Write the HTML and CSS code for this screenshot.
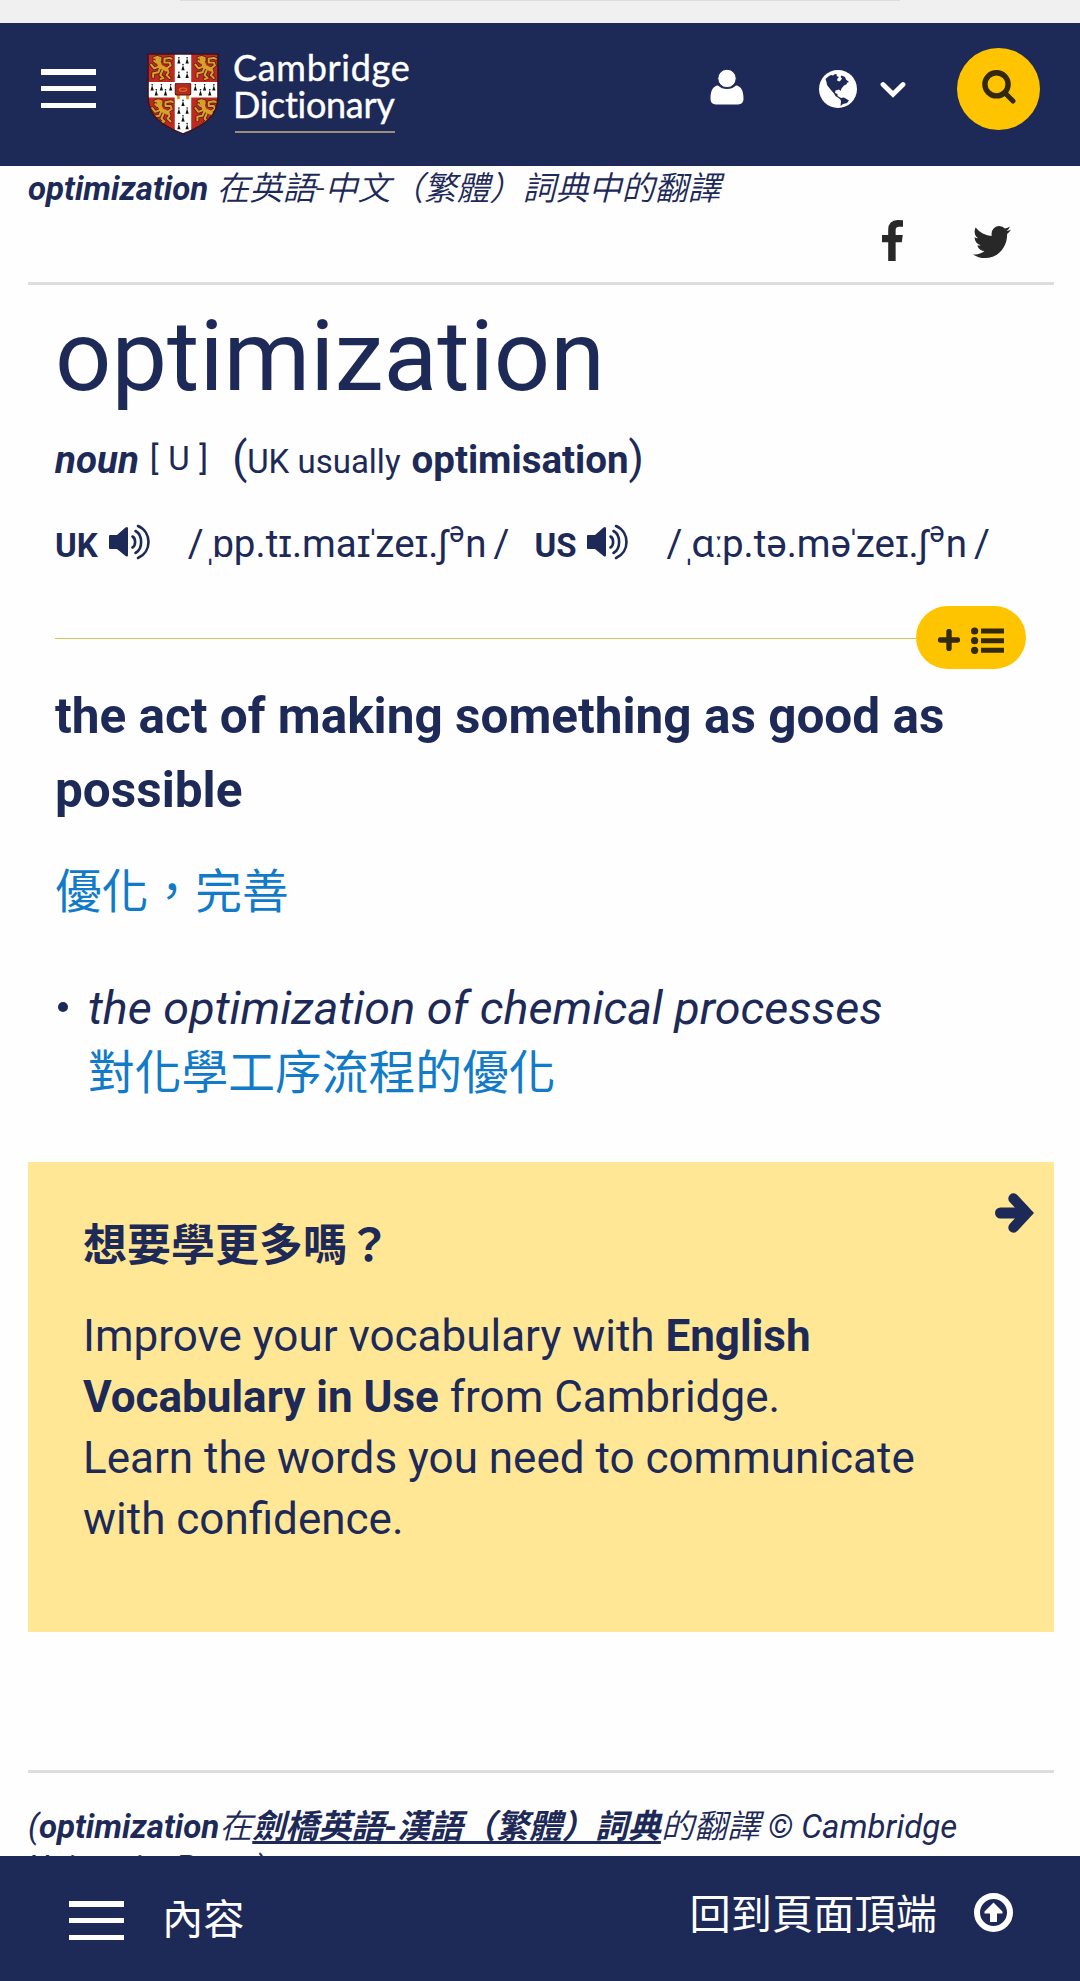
FILE: index.html
```
<!DOCTYPE html>
<html lang="zh-Hant">
<head>
    <meta charset="utf-8">
    <title>optimization | Cambridge Dictionary</title>
    <link rel="stylesheet" href="styles.css">
</head>
<body>
    <div class="browser-edge"><div class="address-bar"></div></div>

    <header class="header">
        <div class="burger"><span></span><span></span><span></span></div>
        <a class="logo">
            <svg class="shield" viewBox="0 0 70 85" preserveAspectRatio="none">
                <defs>
                    <clipPath id="shieldClip"><path d="M1 1H69V45C69 66 56 75 35 84C14 75 1 66 1 45Z"/></clipPath>
                    <g id="lion" fill="none" stroke-linecap="round" stroke-linejoin="round">
                        <path d="M2 11l3 4 5-2M5 4l3-1 3 1 0 3-4 2-2-2M9 9l2 5 6 1 2 4-2 3 3 3M11 14l-2 5-5 1 0 4M13 17l-2 5 3 3-3 1M17 15l4-3-1-3-5 0 0-4 5-1 2 1" stroke="#5f1c12" stroke-width="3.600"/>
                        <path d="M2 11l3 4 5-2M5 4l3-1 3 1 0 3-4 2-2-2M9 9l2 5 6 1 2 4-2 3 3 3M11 14l-2 5-5 1 0 4M13 17l-2 5 3 3-3 1M17 15l4-3-1-3-5 0 0-4 5-1 2 1" stroke="#d9a02a" stroke-width="2"/>
                        <path d="M8 5l3 8 6 3" stroke="#d9a02a" stroke-width="4"/>
                    </g>
                    <g id="ermine" fill="#111"><circle cx="0" cy="-3" r=".8"/><path d="M0-2.500L1.600 3H-1.600Z"/></g>
                </defs>
                <g clip-path="url(#shieldClip)">
                    <rect width="70" height="85" fill="#bf2a20"/>
                    <use href="#lion" x="2" y="1"/>
                    <use href="#lion" x="45" y="1"/>
                    <use href="#lion" x="3" y="46"/>
                    <use href="#lion" x="45" y="46"/>
                    <path d="M27 0H43V85H27ZM0 30H70V46H0Z" fill="#fff"/>
                    <use href="#ermine" x="31" y="8"/><use href="#ermine" x="39" y="8"/>
                    <use href="#ermine" x="35" y="15"/>
                    <use href="#ermine" x="31" y="23"/><use href="#ermine" x="39" y="23"/>
                    <use href="#ermine" x="5" y="36"/><use href="#ermine" x="9" y="41"/><use href="#ermine" x="14" y="36"/><use href="#ermine" x="18" y="41"/><use href="#ermine" x="23" y="36"/>
                    <use href="#ermine" x="47" y="36"/><use href="#ermine" x="52" y="41"/><use href="#ermine" x="56" y="36"/><use href="#ermine" x="61" y="41"/><use href="#ermine" x="65" y="36"/>
                    <use href="#ermine" x="35" y="52"/>
                    <use href="#ermine" x="31" y="60"/><use href="#ermine" x="39" y="60"/>
                    <use href="#ermine" x="35" y="68"/>
                    <use href="#ermine" x="31" y="76"/><use href="#ermine" x="39" y="76"/>
                    <path d="M29 43h3v5h-3zM38 43h3v5h-3z" fill="#d99a22"/>
                    <rect x="27.500" y="31.500" width="15" height="12" rx="1" fill="#b5281c" stroke="#5c1710"/>
                    <ellipse cx="35" cy="38" rx="3.500" ry="1.700" fill="none" stroke="#e07b2c"/>
                </g>
                <path d="M1 1H69V45C69 66 56 75 35 84C14 75 1 66 1 45Z" fill="none" stroke="#3a1420" stroke-width="1.500"/>
            </svg>
            <span class="logo-text"><span class="logo-one">Cambridge</span><span class="logo-two">Dictionary</span></span>
        </a>
        <svg class="user" viewBox="0 0 34 38" preserveAspectRatio="none" fill="#fff">
            <path d="M8 17.500C10.500 20 13.500 21.200 17 21.200S23.500 20 26 17.500C31 18 33.500 23 33.500 31C33.500 35.500 31.500 37.500 28 37.500H6C2.500 37.500 .5 35.500 .5 31C.5 23 3 18 8 17.500Z"/>
            <ellipse cx="17" cy="10" rx="9.200" ry="9.700" stroke="#1d2957" stroke-width="1"/>
        </svg>
        <svg class="globe" viewBox="0 0 38 38">
            <circle cx="19" cy="19" r="19" fill="#fff"/>
            <path d="M6.500 9L10 6L12 5L14 5.500L16 4L18 4.500L17.500 6L20 7L18.500 8.500L18 10.500L20.500 11.500L22 10L23 8.500L21.500 7L22.500 5.500L26 7L27 9.500L30 12L27.500 13L28 14L25 15.500L22.500 18.500L21.500 21L20 19.500L16.500 20.500L16 23L18.500 24L18.500 26L22 28L25 27.500L30 30.500L28 33L24 34L21.500 36L22 31L21 29L16.500 26L15 23.500L11.500 19.500L8 15L7.500 12Z" fill="#1d2957"/>
        </svg>
        <svg class="chevron" viewBox="0 0 26 17"><path d="M3 3.500L13 13.300L23 3.500" fill="none" stroke="#fff" stroke-width="4.800" stroke-linecap="round"/></svg>
        <div class="search">
            <svg viewBox="0 0 34 34" fill="none" stroke="#33290d"><circle cx="14.500" cy="14.300" r="11.600" stroke-width="5.400"/><path d="M23.500 23.500L31 31" stroke-width="5" stroke-linecap="round"/></svg>
        </div>
    </header>

    <main>
        <p class="breadcrumb"><b>optimization</b> <span>在英語-中文（繁體）詞典中的翻譯</span></p>
        <div class="share">
            <svg class="facebook" viewBox="479 0 864 1664" preserveAspectRatio="none"><path d="M1343 12v264h-157q-86 0-116 36t-30 108v189h293l-39 296h-254v759h-306v-759h-255v-296h255v-218q0-186 104-288.500t277-102.500q147 0 228 12z"/></svg>
            <svg class="twitter" viewBox="108 256 1576 1280" preserveAspectRatio="none"><path d="M1684 408q-67 98-162 167 1 14 1 42 0 130-38 259.500t-115.500 248.500-184.500 210.500-258 146-323 54.500q-271 0-496-145 35 4 78 4 225 0 401-138-105-2-188-64.500t-114-159.500q33 5 61 5 43 0 85-11-112-23-185.500-111.500t-73.500-205.500v-4q68 38 146 41-66-44-105-115t-39-154q0-88 44-163 121 149 294.500 238.500t371.500 99.500q-8-38-8-74 0-134 94.500-228.500t228.500-94.500q140 0 236 102 109-21 205-78-37 115-142 178 93-10 186-50z"/></svg>
        </div>

        <section class="entry">
            <h1>optimization</h1>
            <div class="pos">
                <b class="noun">noun</b>
                <span class="gram">[ U ]</span>
                <span class="variant"><span class="paren">(</span><span class="usage">UK usually</span><b>optimisation</b><span class="paren">)</span></span>
            </div>
            <div class="pron">
                <b class="region">UK</b>
                <svg class="speaker" viewBox="0 0 41 36"><path d="M1 11H8L16.500 3.500Q19 2 19 4.500V31Q19 33.500 16.500 32L8 25H1Q0 25 0 24V12Q0 11 1 11Z" fill="#1d2957"/><g fill="none" stroke="#1d2957" stroke-width="2.600" stroke-linecap="round"><path d="M23.500 12.500C27 14.500 27 21.500 23.500 23.500M26.500 7C34 11 34 25 26.500 29M29 2C43 8 43 28 29 34"/></g></svg>
                <span class="ipa ipa-uk">/<i><span class="mark">ˌ</span>ɒp.tɪ.maɪ<span class="mark">ˈ</span>zeɪ.ʃ<sup>ə</sup>n</i>/</span>
                <b class="region">US</b>
                <svg class="speaker" viewBox="0 0 41 36"><path d="M1 11H8L16.500 3.500Q19 2 19 4.500V31Q19 33.500 16.500 32L8 25H1Q0 25 0 24V12Q0 11 1 11Z" fill="#1d2957"/><g fill="none" stroke="#1d2957" stroke-width="2.600" stroke-linecap="round"><path d="M23.500 12.500C27 14.500 27 21.500 23.500 23.500M26.500 7C34 11 34 25 26.500 29M29 2C43 8 43 28 29 34"/></g></svg>
                <span class="ipa ipa-us">/<i><span class="mark">ˌ</span>ɑ<span class="length">ː</span>p.tə.mə<span class="mark">ˈ</span>zeɪ.ʃ<sup>ə</sup>n</i>/</span>
            </div>
            <div class="wordlist">
                <div class="wordlist-line"></div>
                <div class="wordlist-button">
                    <svg class="plus" viewBox="0 0 22 22"><path d="M11 2.500V19.500M2.500 11H19.500" stroke="#33290d" stroke-width="5.400" stroke-linecap="round"/></svg>
                    <svg class="list" viewBox="0 0 33 27" fill="#33290d"><circle cx="3.600" cy="4" r="3.600"/><circle cx="3.600" cy="13.700" r="3.600"/><circle cx="3.600" cy="23.300" r="3.600"/><path d="M10 1.500H33V6.500H10ZM10 11.200H33V16.200H10ZM10 20.800H33V25.800H10Z"/></svg>
                </div>
            </div>
            <h2>the act of making something as good as possible</h2>
            <p class="trans">優化，完善</p>
            <div class="example">
                <span class="bullet"></span>
                <div>
                    <em>the optimization of chemical processes</em>
                    <p class="trans">對化學工序流程的優化</p>
                </div>
            </div>
        </section>

        <section class="promo">
            <div class="promo-text">
                <h3>想要學更多嗎？</h3>
                <p>Improve your vocabulary with <b>English Vocabulary in Use</b> from Cambridge.<br>Learn the words you need to communicate with confidence.</p>
            </div>
            <svg class="arrow" viewBox="0 0 39 40" fill="none" stroke="#1d2957" stroke-linecap="round"><path d="M5.500 20H30" stroke-width="11"/><path d="M18.500 5.500L32 20L18.500 34.500" stroke-width="10.400"/></svg>
        </section>

        <p class="credit">(<b>optimization</b><span>在</span><a>劍橋英語-漢語（繁體）詞典</a><span>的翻譯</span> © Cambridge University Press)</p>
    </main>

    <footer class="bottom-bar">
        <div class="burger"><span></span><span></span><span></span></div>
        <span class="contents">內容</span>
        <span class="to-top">回到頁面頂端</span>
        <svg class="top-icon" viewBox="0 0 39 39"><circle cx="19.500" cy="19.500" r="16.500" fill="none" stroke="#fff" stroke-width="6"/><path d="M19.500 9.500L28.500 18.500V20.500H23V29H16V20.500H10.500V18.500Z" fill="#fff"/></svg>
    </footer>
</body>
</html>
```
FILE: styles.css
```
* {
    box-sizing: border-box;
}

body {
    margin: 0;
    height: 1981px;
    overflow: hidden;
    background-color: #fefefe;
    color: #1d2957;
    font-family: Roboto, "Noto Sans CJK TC", sans-serif;
}

h1, h2, h3, p {
    margin: 0;
}

svg {
    display: block;
    flex: none;
}

.browser-edge {
    height: 23px;
    background-color: #f0f0f0;
}

.address-bar {
    width: 720px;
    height: 1px;
    margin: 0 auto;
    background-color: #dcdcdc;
}

/* top navigation */
.header {
    display: flex;
    align-items: flex-start;
    height: 143px;
    padding-left: 41px;
    background-color: #1d2957;
}

.burger {
    display: flex;
    flex-direction: column;
    justify-content: space-between;
    width: 55px;
    height: 39px;
    margin-top: 46px;
}

.burger span {
    height: 5.5px;
    background-color: #fff;
}

.logo {
    display: flex;
    width: 563px;
    margin: 30px 0 0 51px;
    color: #fff;
}

.shield {
    width: 72px;
    height: 82px;
}

.logo-text {
    display: flex;
    flex-direction: column;
    width: 160px;
    height: 80px;
    margin-left: 16px;
    border-bottom: 2px solid #a08c7c;
    font-family: Lato, sans-serif;
    font-size: 36px;
    font-variant-ligatures: none;
    line-height: 37px;
    white-space: nowrap;
    -webkit-text-stroke: 0.4px #fff;
}

.logo-one {
    letter-spacing: 0.7px;
    margin: -4px 0 0 -2px;
}

.logo-two {
    letter-spacing: -0.3px;
    margin-left: -2px;
}

.user {
    width: 34px;
    height: 36px;
    margin-top: 46px;
}

.globe {
    width: 38px;
    height: 38px;
    margin: 47px 0 0 75px;
}

.chevron {
    width: 26px;
    height: 17px;
    margin: 58px 0 0 23px;
}

.search {
    width: 83px;
    height: 82px;
    margin: 25px 0 0 51px;
    padding: 22px 0 0 25px;
    border-radius: 50%;
    background-color: #ffc400;
}

.search svg {
    width: 34px;
    height: 34px;
}

main {
    padding: 0 26px 0 28px;
}

.breadcrumb {
    height: 54px;
    padding-top: 5px;
    font-size: 33px;
    font-style: italic;
    line-height: 36px;
    white-space: nowrap;
}

.breadcrumb span,
.credit span {
    font-weight: 350;
}

.share {
    display: flex;
    align-items: flex-start;
    justify-content: flex-end;
    gap: 70px;
    height: 65px;
    padding-right: 43px;
    border-bottom: 3px solid #ddd;
    fill: #282828;
}

.facebook {
    width: 21px;
    height: 41px;
}

.twitter {
    width: 38px;
    height: 32px;
    margin-top: 6px;
}

/* dictionary entry */
.entry {
    height: 877px;
    padding: 0 28px 0 27px;
}

h1 {
    height: 143px;
    padding-top: 13px;
    font-size: 99px;
    font-weight: 400;
    line-height: 116px;
}

.pos {
    display: flex;
    align-items: baseline;
    height: 86px;
    font-size: 38.5px;
    line-height: 60px;
    white-space: nowrap;
}

.noun {
    font-style: italic;
}

.gram {
    margin-left: 11px;
    font-size: 33px;
    word-spacing: 1.5px;
    transform: translateY(-3px);
}

.variant {
    margin-left: 24px;
}

.paren {
    font-size: 44px;
}

.usage {
    margin-right: 11px;
    font-size: 33px;
}

.pron {
    display: flex;
    align-items: baseline;
    height: 92px;
    font-size: 38.5px;
    line-height: 60px;
    white-space: nowrap;
}

.region {
    font-size: 33px;
}

.speaker {
    width: 41px;
    height: 36px;
    margin-left: 11px;
    transform: translateY(3px);
}

.ipa {
    margin-left: 38px;
}

.ipa i {
    margin: 0 7px 0 4px;
    font-style: normal;
}

.ipa .mark {
    margin: 0 -4px;
}

.ipa .length {
    margin: 0 -2px;
}

.ipa-uk {
    margin-right: 25px;
}

.ipa sup {
    margin: 0 1px 0 2px;
    font-size: 29px;
    line-height: 0;
    vertical-align: 15px;
}

.wordlist {
    display: flex;
    align-items: center;
    height: 63px;
}

.wordlist-line {
    flex: 1;
    height: 1px;
    margin-top: 2px;
    background-color: #d0c45a;
}

.wordlist-button {
    display: flex;
    width: 110px;
    height: 63px;
    padding: 21px 0 0 22px;
    border-radius: 32px;
    background-color: #ffc400;
}

.plus {
    width: 22px;
    height: 22px;
    margin-top: 2px;
}

.list {
    width: 33px;
    height: 27px;
    margin-left: 11px;
}

h2 {
    margin-top: 10px;
    font-size: 49.5px;
    line-height: 74px;
}

.trans {
    color: #117bc9;
    font-size: 46.75px;
    line-height: 66px;
}

.entry > .trans {
    margin-top: 32px;
}

.example {
    display: flex;
    margin-top: 50px;
    font-size: 46.75px;
    line-height: 66px;
}

.example .trans {
    line-height: 65px;
}

.bullet {
    width: 10px;
    height: 10px;
    margin: 27px 20px 0 3px;
    border-radius: 50%;
    background-color: #1d2957;
}

/* yellow banner */
.promo {
    display: flex;
    justify-content: space-between;
    height: 470px;
    padding: 31px 20px 0 55px;
    background-color: #ffe796;
}

.promo-text {
    width: 860px;
    padding-top: 23px;
    font-size: 44px;
    line-height: 61px;
}

.promo h3 {
    margin-bottom: 29px;
    font-size: 44px;
    line-height: 61px;
}

.arrow {
    width: 39px;
    height: 40px;
}

.credit {
    margin-top: 138px;
    padding-top: 33px;
    border-top: 3px solid #ddd;
    font-size: 33px;
    font-style: italic;
    line-height: 41px;
}

.credit a {
    font-weight: 700;
    text-decoration: underline 3px;
    text-decoration-skip-ink: none;
    text-underline-offset: 3px;
}

/* fixed toolbar */
.bottom-bar {
    position: fixed;
    left: 0;
    bottom: 0;
    display: flex;
    width: 100%;
    height: 125px;
    padding-left: 69px;
    background-color: #1d2957;
    color: #fff;
    font-size: 41.25px;
    line-height: 60px;
}

.bottom-bar .burger {
    margin-top: 45px;
}

.contents {
    margin: 34px 0 0 38px;
}

.to-top {
    margin: 29px 37px 0 auto;
}

.top-icon {
    width: 39px;
    height: 39px;
    margin: 37px 67px 0 0;
}
```
